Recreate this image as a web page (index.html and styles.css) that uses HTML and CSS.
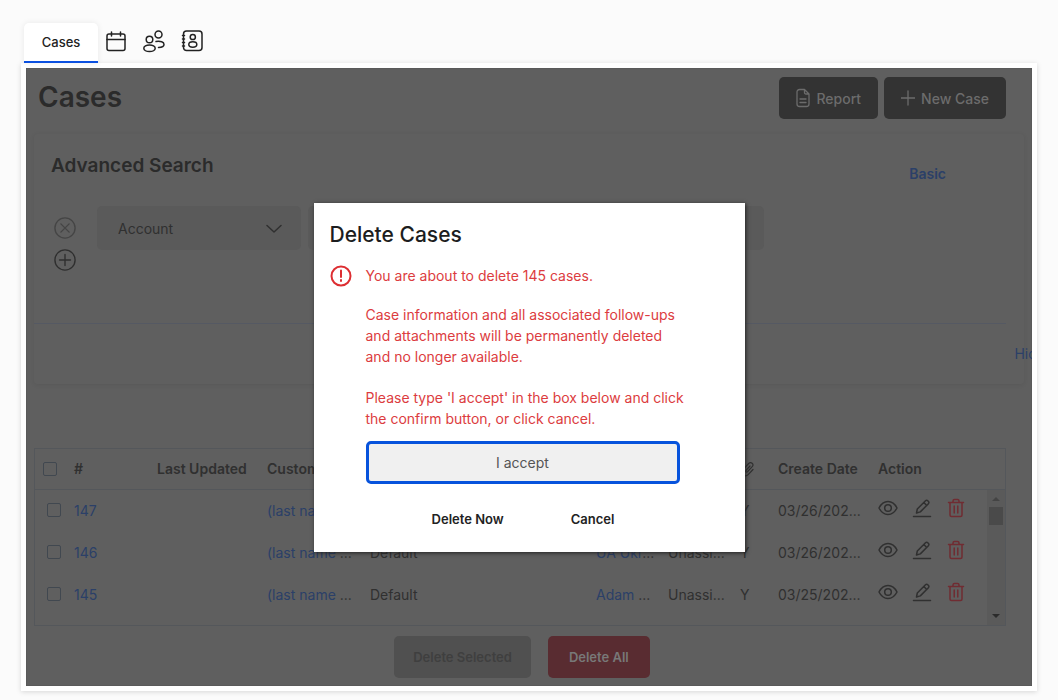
FILE: index.html
```html
<!DOCTYPE html>
<html lang="en">
<head>
    <meta charset="UTF-8" />
    <meta name="viewport" content="width=device-width, initial-scale=1.0" />
    <title>Cases</title>
    <link rel="stylesheet" href="styles.css">
</head>
<body>
    <!-- Icon set -->
    <svg class="sprite" aria-hidden="true">
        <symbol id="eye" viewBox="0 0 20 20">
            <path d="M1 10C3 6 6.200 3.500 10 3.500S17 6 19 10c-2 4-5.200 6.500-9 6.500S3 14 1 10z"/>
            <circle cx="10" cy="10" r="3.300"/>
        </symbol>
        <symbol id="pen" viewBox="0 0 20 20">
            <path d="M1.500 18.500h17M4.500 15l.8-4L13.500 2.800c.7-.7 1.600-.7 2.200-.1l.8.8c.6.6.6 1.500-.1 2.200L8.300 13.900zM11.800 4.500l3 3"/>
        </symbol>
        <symbol id="trash" viewBox="0 0 20 20">
            <path d="M2.500 4.500h15M4 4.500V17c0 .9.500 1.500 1.400 1.500h9.200c.9 0 1.400-.6 1.400-1.500V4.500M7 4.300V3c0-.9.600-1.500 1.500-1.500h3c.9 0 1.500.6 1.500 1.500v1.300M8.200 8v7M11.800 8v7"/>
        </symbol>
    </svg>

    <!-- Tabs -->
    <nav class="tabs">
        <a class="tab active" href="#">Cases</a>
        <a class="tab-icon" href="#" aria-label="Calendar">
            <svg viewBox="0 0 24 24"><rect x="3" y="5" width="18" height="16.500" rx="2"/><path d="M3 10.500h18M7.500 3v4M16.500 3v4"/></svg>
        </a>
        <a class="tab-icon" href="#" aria-label="Contacts">
            <svg viewBox="0 0 24 24"><circle cx="7.500" cy="10.500" r="3.300"/><ellipse cx="7.500" cy="19.300" rx="5.700" ry="3.300"/><circle cx="16.500" cy="5.500" r="3.500"/><path d="M14 12.500c4.500-.8 8 .7 8 2.900 0 1.700-2 2.900-5.500 3"/></svg>
        </a>
        <a class="tab-icon" href="#" aria-label="Address book">
            <svg viewBox="0 0 24 24"><rect x="3.500" y="2" width="18.500" height="19.500" rx="3"/><circle cx="12.800" cy="8" r="2.600"/><ellipse cx="12.800" cy="15.500" rx="4" ry="2.700"/><path d="M2.500 6.500h2M2.500 10h2M2.500 13.500h2M2.500 17h2"/></svg>
        </a>
    </nav>

    <div class="frame">
        <main class="panel">
            <header class="page-head">
                <h1>Cases</h1>
                <div class="head-actions">
                    <button class="btn btn-dark">
                        <svg viewBox="0 0 14 20"><path d="M8.500 1.500H3.500c-1.500 0-2.500 1-2.500 2.500v12c0 1.500 1 2.500 2.500 2.500h7c1.500 0 2.500-1 2.500-2.500V6zM8.500 1.500v3c0 1 .5 1.500 1.500 1.500h3M4 11h6M4 14.500h6"/></svg>
                        Report
                    </button>
                    <button class="btn btn-dark">
                        <svg viewBox="0 0 14 20"><path d="M7 3v14M0 10h14"/></svg>
                        New Case
                    </button>
                </div>
            </header>

            <!-- Advanced search -->
            <section class="search">
                <div class="search-head">
                    <h2>Advanced Search</h2>
                    <a class="basic" href="#">Basic</a>
                </div>
                <div class="search-row">
                    <div class="row-tools">
                        <button class="round muted" aria-label="Remove filter"><svg viewBox="0 0 24 24"><circle cx="12" cy="12" r="11"/><path d="M7.500 7.500l9 9M16.500 7.500l-9 9"/></svg></button>
                        <button class="round" aria-label="Add filter"><svg viewBox="0 0 24 24"><circle cx="12" cy="12" r="11"/><path d="M12 6v12M6 12h12"/></svg></button>
                    </div>
                    <div class="select-wrap">
                        <select class="field" aria-label="Field">
                            <option>Account</option>
                        </select>
                        <svg class="chevron" viewBox="0 0 16 10"><path d="M1 1.500l7 6.500 7-6.500"/></svg>
                    </div>
                    <input class="field value" type="text" aria-label="Value">
                </div>
                <div class="search-foot"><a href="#">Hide</a></div>
            </section>

            <!-- Case list -->
            <div class="grid">
                <table>
                    <colgroup>
                        <col class="c-check"><col class="c-id"><col class="c-updated"><col class="c-customer"><col class="c-dept">
                        <col class="c-agent"><col class="c-agent"><col class="c-clip"><col class="c-date"><col>
                    </colgroup>
                    <thead>
                        <tr>
                            <th><input type="checkbox" aria-label="Select all"></th>
                            <th>#</th>
                            <th>Last Updated</th>
                            <th>Customer</th>
                            <th></th>
                            <th></th>
                            <th></th>
                            <th><svg class="clip" viewBox="0 0 16 16"><path d="M10 5L6 9.300c-1 1.200.5 2.500 1.600 1.400l4.600-5c2.200-2.600-1.200-5.400-3.500-3.200L3.200 8.300c-3.600 4 1.600 8.800 5.200 5L13 8.500"/></svg></th>
                            <th>Create Date</th>
                            <th>Action</th>
                        </tr>
                    </thead>
                    <tbody>
                        <tr>
                            <td><input type="checkbox" aria-label="Select case 147"></td>
                            <td><a href="#">147</a></td>
                            <td></td>
                            <td><a href="#">(last name</a> ...</td>
                            <td>Default</td>
                            <td></td>
                            <td>Unassi...</td>
                            <td>Y</td>
                            <td>03/26/202...</td>
                            <td><div class="actions">
                                <button aria-label="View"><svg><use href="#eye"/></svg></button>
                                <button aria-label="Edit"><svg><use href="#pen"/></svg></button>
                                <button class="del" aria-label="Delete"><svg><use href="#trash"/></svg></button>
                            </div></td>
                        </tr>
                        <tr>
                            <td><input type="checkbox" aria-label="Select case 146"></td>
                            <td><a href="#">146</a></td>
                            <td></td>
                            <td><a href="#">(last name</a> ...</td>
                            <td>Default</td>
                            <td><a href="#">UA Ukr</a>...</td>
                            <td>Unassi...</td>
                            <td>Y</td>
                            <td>03/26/202...</td>
                            <td><div class="actions">
                                <button aria-label="View"><svg><use href="#eye"/></svg></button>
                                <button aria-label="Edit"><svg><use href="#pen"/></svg></button>
                                <button class="del" aria-label="Delete"><svg><use href="#trash"/></svg></button>
                            </div></td>
                        </tr>
                        <tr>
                            <td><input type="checkbox" aria-label="Select case 145"></td>
                            <td><a href="#">145</a></td>
                            <td></td>
                            <td><a href="#">(last name</a> ...</td>
                            <td>Default</td>
                            <td><a href="#">Adam</a> ...</td>
                            <td>Unassi...</td>
                            <td>Y</td>
                            <td>03/25/202...</td>
                            <td><div class="actions">
                                <button aria-label="View"><svg><use href="#eye"/></svg></button>
                                <button aria-label="Edit"><svg><use href="#pen"/></svg></button>
                                <button class="del" aria-label="Delete"><svg><use href="#trash"/></svg></button>
                            </div></td>
                        </tr>
                    </tbody>
                </table>
                <div class="scrollbar">
                    <span class="arrow up"></span>
                    <span class="thumb"></span>
                    <span class="arrow down"></span>
                </div>
            </div>

            <div class="bulk">
                <button class="btn btn-disabled" disabled>Delete Selected</button>
                <button class="btn btn-danger">Delete All</button>
            </div>

            <!-- Delete dialog -->
            <div class="overlay">
                <form class="modal" role="dialog" aria-labelledby="modal-title">
                    <h2 id="modal-title">Delete Cases</h2>
                    <div class="warning">
                        <svg class="alert" viewBox="0 0 22 22"><circle cx="11" cy="11" r="9.500"/><path d="M11 5.500v6.500M11 15v1"/></svg>
                        <div class="warning-text">
                            <p>You are about to delete 145 cases.</p>
                            <p>Case information and all associated follow-ups and attachments will be permanently deleted and no longer available.</p>
                            <p><label for="accept">Please type 'I accept' in the box below and click the confirm button, or click cancel.</label></p>
                            <input id="accept" type="text" value="I accept">
                        </div>
                    </div>
                    <div class="modal-actions">
                        <button type="button">Delete Now</button>
                        <button type="button">Cancel</button>
                    </div>
                </form>
            </div>
        </main>
    </div>
</body>
</html>
```

FILE: styles.css
```css
* {
    box-sizing: border-box;
}

body {
    font-family: Inter, "Liberation Sans", sans-serif;
    font-size: 14px;
    background: #fbfbfb;
    color: #303030;
    margin: 0;
    padding: 23px 21px 9px;
}

h1, h2, p {
    margin: 0;
}

a {
    color: #2b4068;
    text-decoration: none;
}

button, input, select {
    font-family: inherit;
    font-size: 14px;
}

button {
    border: none;
    background: none;
    padding: 0;
    color: inherit;
    cursor: pointer;
}

svg {
    display: block;
    fill: none;
    stroke: currentColor;
    stroke-width: 1.5;
    stroke-linecap: round;
    stroke-linejoin: round;
}

.sprite {
    position: absolute;
    width: 0;
    height: 0;
}

/* Tabs */
.tabs {
    display: flex;
    height: 40px;
    padding-left: 3px;
}

.tab {
    position: relative;
    z-index: 1;
    width: 74px;
    line-height: 38px;
    text-align: center;
    font-size: 13px;
    font-weight: 500;
    color: #222;
    background: #fff;
    border-bottom: 2px solid #0b50e0;
    border-radius: 5px 5px 0 0;
    box-shadow: 0 0 6px rgba(0, 0, 0, 0.08);
}

.tab-icon {
    width: 38px;
    padding: 6px 0 0 6px;
    color: #222;
}

.tab-icon svg {
    width: 24px;
    height: 24px;
}

/* Frame round the dimmed page */
.frame {
    padding: 5px;
    background: #fff;
    box-shadow: 0 1px 5px rgba(0, 0, 0, 0.15);
}

.panel {
    position: relative;
    overflow: hidden;
    background: #5f5f5f;
    padding: 9px 8px 8px;
    box-shadow: inset 0 0 1px #333;
}

.page-head {
    display: flex;
    justify-content: space-between;
    padding: 0 18px 0 4px;
}

.page-head h1 {
    font-size: 28px;
    line-height: 40px;
    font-weight: 600;
    color: #2b2b2b;
}

.head-actions {
    display: flex;
    gap: 6px;
}

.btn {
    height: 42px;
    padding: 0 17px;
    border-radius: 5px;
}

.btn-dark {
    display: flex;
    align-items: center;
    gap: 6px;
    background: #333;
    color: #6c6c6c;
    font-weight: 500;
}

.btn-dark svg {
    width: 14px;
    height: 20px;
    stroke-width: 1.3;
}

/* Advanced search */
.search {
    margin-top: 15px;
    height: 250px;
    border-radius: 4px;
    box-shadow: 0 1px 5px rgba(0, 0, 0, 0.08);
}

.search-head {
    display: flex;
    justify-content: space-between;
    height: 72px;
    padding: 20px 78px 0 17px;
}

.search-head h2 {
    font-size: 19px;
    line-height: 24px;
    font-weight: 600;
    color: #2b2b2b;
}

.basic {
    padding-top: 10px;
    line-height: 20px;
    font-weight: 600;
}

.search-row {
    display: flex;
    gap: 7px;
    height: 117px;
    padding-left: 20px;
}

.row-tools {
    display: flex;
    flex-direction: column;
    gap: 10px;
    width: 36px;
    padding-top: 11px;
}

.round {
    width: 22px;
    height: 22px;
    color: #2f2f2f;
}

.round.muted {
    color: #454545;
}

.select-wrap {
    position: relative;
    width: 204px;
}

.field {
    width: 100%;
    height: 44px;
    padding: 0 21px;
    border: none;
    border-radius: 5px;
    background: #5a5a5a;
    color: #303030;
    appearance: none;
}

.field.value {
    width: 456px;
}

.chevron {
    position: absolute;
    right: 19px;
    top: 18px;
    width: 16px;
    height: 10px;
    pointer-events: none;
}

.search-foot {
    margin-right: 18px;
    border-top: 1px solid #555963;
    text-align: right;
}

.search-foot a {
    display: inline-block;
    line-height: 20px;
    margin: 20px -39px 0 0;
}

/* Case list */
.grid {
    position: relative;
    margin: 64px 18px 0 0;
    border: 1px solid #54575b;
}

table {
    width: 100%;
    table-layout: fixed;
    border-collapse: collapse;
}

.c-check { width: 39px; }
.c-id { width: 83px; }
.c-updated { width: 110px; }
.c-customer { width: 103px; }
.c-dept { width: 226px; }
.c-agent { width: 72px; }
.c-clip { width: 38px; }
.c-date { width: 100px; }

th, td {
    height: 42px;
    padding: 0;
    text-align: left;
    white-space: nowrap;
}

th {
    height: 40px;
    font-weight: 600;
    border-bottom: 1px solid #54575b;
}

tbody tr:last-child td {
    height: 52px;
    padding-bottom: 10px;
}

input[type="checkbox"] {
    display: block;
    appearance: none;
    width: 14px;
    height: 14px;
    margin: 0 0 0 12px;
    border: 1px solid #414850;
    border-radius: 2px;
}

th input[type="checkbox"] {
    margin-left: 8px;
}

.clip {
    width: 16px;
    height: 16px;
    stroke-width: 1.2;
}

.actions {
    display: flex;
    gap: 14px;
    padding-bottom: 4px;
}

.actions svg {
    width: 20px;
    height: 20px;
}

.actions .del {
    color: #702c32;
}

.scrollbar {
    position: absolute;
    top: 41px;
    right: 0;
    bottom: 0;
    width: 18px;
    display: flex;
    flex-direction: column;
    align-items: center;
    padding: 7px 0;
    background: #5a5a5a;
}

.arrow {
    border: 4px solid transparent;
}

.arrow.up {
    border-top: none;
    border-bottom-color: #444;
}

.arrow.down {
    margin-top: auto;
    border-bottom: none;
    border-top-color: #2b2b2b;
}

.thumb {
    width: 14px;
    height: 18px;
    margin-top: 6px;
    background: #4a4a4a;
}

.bulk {
    display: flex;
    justify-content: center;
    gap: 17px;
    margin: 10px 14px 0 0;
}

.bulk .btn {
    font-size: 13px;
    font-weight: 600;
}

.bulk .btn-disabled {
    padding: 0 19px;
    background: #505050;
    color: #3f3f3f;
}

.bulk .btn-danger {
    padding: 0 21px;
    background: #592c31;
    color: #787878;
}

/* Delete dialog */
.overlay {
    position: absolute;
    inset: 0;
    display: flex;
    align-items: center;
    justify-content: center;
}

.modal {
    width: 431px;
    padding: 19px 16px 22px;
    background: #fff;
    box-shadow: 1px 1px 4px #222;
}

.modal h2 {
    font-size: 21px;
    line-height: 25px;
    font-weight: 500;
    color: #1c1d20;
}

.warning {
    display: flex;
    gap: 14px;
    margin-top: 18px;
    color: #dc3c40;
}

.alert {
    flex: none;
    width: 22px;
    height: 22px;
    color: #dd2e32;
    stroke-width: 2;
}

.warning-text {
    width: 322px;
    line-height: 21px;
}

.warning-text p {
    margin-bottom: 20px;
}

.warning-text p:nth-child(1) {
    margin-bottom: 18px;
}

.warning-text p:nth-child(3) {
    margin-bottom: 12px;
}

#accept {
    display: block;
    width: 314px;
    height: 43px;
    border: 3px solid #0753dc;
    border-radius: 5px;
    outline: none;
    background: #f0f0f0;
    color: #555;
    text-align: center;
}

.modal-actions {
    display: flex;
    justify-content: center;
    gap: 67px;
    margin: 24px 0 0 -12px;
}

.modal-actions button {
    font-size: 13px;
    line-height: 22px;
    font-weight: 600;
    color: #222;
}
```
